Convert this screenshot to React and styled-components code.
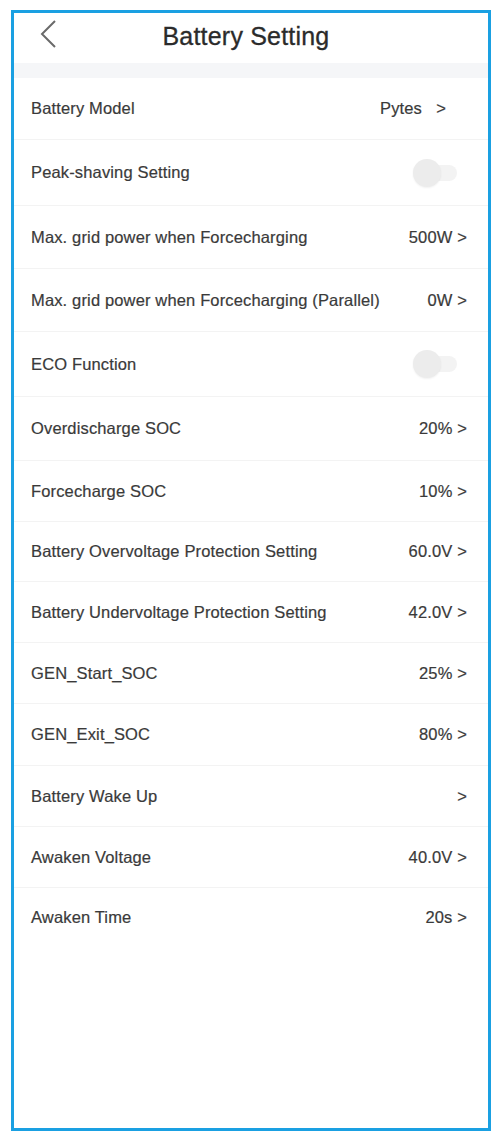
import React from 'react';
import styled, { createGlobalStyle } from 'styled-components';

const GlobalStyle = createGlobalStyle`
  html, body {
    margin: 0;
    padding: 0;
    background: #ffffff;
  }
  body {
    font-family: "Liberation Sans", Arial, sans-serif;
  }
`;

const Page = styled.div`
  width: 500px;
  height: 1140px;
  padding: 10px 9px 9px 11px;
  box-sizing: border-box;
`;

const Frame = styled.div`
  height: 100%;
  border: 3px solid #1aa0e2;
  box-sizing: border-box;
  display: flex;
  flex-direction: column;
  background: #fff;
`;

const Header = styled.div`
  height: 50px;
  display: flex;
  align-items: center;
  justify-content: center;
  position: relative;
`;

const BackBtn = styled.div`
  position: absolute;
  left: 22px;
  top: 6px;
  width: 24px;
  height: 30px;
  display: flex;
  align-items: center;
  justify-content: center;
`;

const Title = styled.h1`
  margin: -4px 0 0 -10px;
  font-size: 25px;
  font-weight: 400;
  color: #2b2b2b;
  letter-spacing: 0.2px;
  -webkit-text-stroke: 0.3px #2b2b2b;
`;

const Band = styled.div`
  height: 15px;
  background: #f5f6f8;
`;

const List = styled.div`
  display: flex;
  flex-direction: column;
`;

const Row = styled.div`
  height: ${p => p.$h}px;
  display: flex;
  align-items: center;
  justify-content: space-between;
  padding: 0 21px 0 17px;
  border-bottom: 1px solid ${p => (p.$last ? 'transparent' : '#f3f3f3')};
  box-sizing: border-box;
`;

const Label = styled.span`
  font-size: 16.5px;
  letter-spacing: 0.15px;
  color: #3a3a3a;
  -webkit-text-stroke: 0.2px #3a3a3a;
`;

const Value = styled.span`
  font-size: 16.5px;
  letter-spacing: 0.15px;
  color: #3a3a3a;
  -webkit-text-stroke: 0.2px #3a3a3a;
  white-space: pre;
  margin-right: ${p => p.$shift || 0}px;
`;

const Toggle = styled.div`
  width: 44px;
  height: 28px;
  position: relative;
  margin-right: 10px;
  &::before {
    content: '';
    position: absolute;
    left: 6px;
    right: 0;
    top: 6px;
    height: 16px;
    border-radius: 8px;
    background: #f3f3f3;
  }
  &::after {
    content: '';
    position: absolute;
    left: 0;
    top: 0;
    width: 28px;
    height: 28px;
    border-radius: 50%;
    background: #ececec;
    box-shadow: 0 1px 2px rgba(0, 0, 0, 0.06);
  }
`;

const rows = [
  { label: 'Battery Model', value: 'Pytes   >', h: 62, shift: 21 },
  { label: 'Peak-shaving Setting', toggle: true, h: 66 },
  { label: 'Max. grid power when Forcecharging', value: '500W >', h: 63 },
  { label: 'Max. grid power when Forcecharging (Parallel)', value: '0W >', h: 63 },
  { label: 'ECO Function', toggle: true, h: 65 },
  { label: 'Overdischarge SOC', value: '20% >', h: 64 },
  { label: 'Forcecharge SOC', value: '10% >', h: 61 },
  { label: 'Battery Overvoltage Protection Setting', value: '60.0V >', h: 60 },
  { label: 'Battery Undervoltage Protection Setting', value: '42.0V >', h: 61 },
  { label: 'GEN_Start_SOC', value: '25% >', h: 61 },
  { label: 'GEN_Exit_SOC', value: '80% >', h: 62 },
  { label: 'Battery Wake Up', value: '>', h: 61 },
  { label: 'Awaken Voltage', value: '40.0V >', h: 61 },
  { label: 'Awaken Time', value: '20s >', h: 60 },
];

const App = () => {
  return (
    <>
      <GlobalStyle />
      <Page>
        <Frame>
          <Header>
            <BackBtn>
              <svg width="20" height="30" viewBox="0 0 20 30">
                <path d="M17 2 L4 15 L17 28" fill="none" stroke="#6a6a6a" strokeWidth="2" />
              </svg>
            </BackBtn>
            <Title>Battery Setting</Title>
          </Header>
          <Band />
          <List>
            {rows.map((r, i) => (
              <Row key={r.label} $h={r.h} $last={i === rows.length - 1}>
                <Label>{r.label}</Label>
                {r.toggle ? <Toggle /> : <Value $shift={r.shift}>{r.value}</Value>}
              </Row>
            ))}
          </List>
        </Frame>
      </Page>
    </>
  );
};

export default App;
